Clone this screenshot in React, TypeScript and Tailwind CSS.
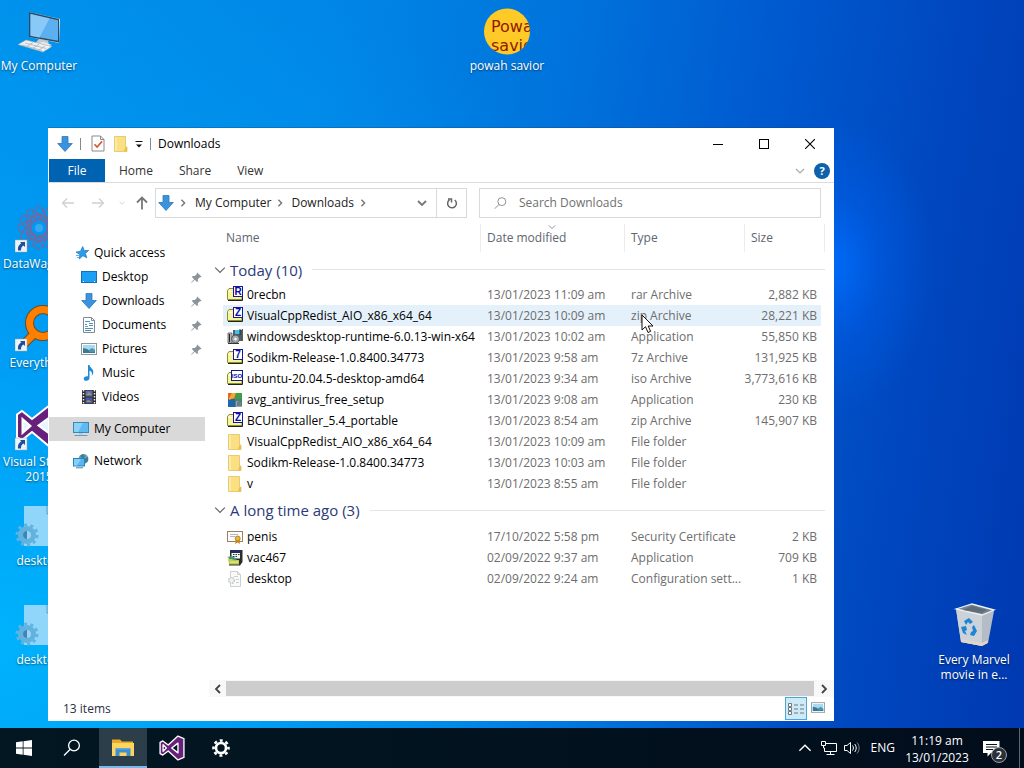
import type { ReactNode } from 'react';

type ArchiveLabel = 'R' | 'Z' | '7' | 'ISO';

interface FileEntry {
    name: string;
    icon: ReactNode;
    modified: string;
    type: string;
    size?: string;
    hovered?: boolean;
}

interface FileGroup {
    label: string;
    headerClass: string;
    files: FileEntry[];
}

/* ---------- small glyphs ---------- */

interface ChevronProps {
    direction: 'up' | 'down' | 'left' | 'right';
    size?: number;
    stroke?: number;
    className?: string;
}

const chevronPaths = {
    up: 'M1 7 L5 3 L9 7',
    down: 'M1 3 L5 7 L9 3',
    left: 'M7 1 L3 5 L7 9',
    right: 'M3 1 L7 5 L3 9',
};

function Chevron({direction, size = 10, stroke = 1.2, className}: ChevronProps) {
    return (
        <svg width={size} height={size} viewBox="0 0 10 10" fill="none" stroke="currentColor" strokeWidth={stroke} className={className}>
            <path d={chevronPaths[direction]} />
        </svg>
    );
}

function DownloadArrow() {
    return (
        <svg width="16" height="16" viewBox="0 0 16 16" className="shrink-0">
            <path d="M5 .5h6v7h4.3L8 15.5.7 7.5H5z" fill="#3c93dd" stroke="#2f78bb" strokeWidth=".8" />
        </svg>
    );
}

function FolderIcon() {
    return (
        <svg width="16" height="16" viewBox="0 0 16 16" className="shrink-0">
            <path d="M1.500.5h11v10.500h1.500v4.500H1.500z" fill="#fbdf83" stroke="#e3c062" strokeWidth=".8" />
            <path d="M2 1h2v14H2z" fill="#fdeaa6" />
            <path d="M12.4 11.2H14v4h-3z" fill="#e8bf4f" />
        </svg>
    );
}

function CheckDocIcon() {
    return (
        <svg width="14" height="17" viewBox="0 0 14 17">
            <path d="M1 1h8.5L13 4.500V16H1z" fill="#fff" stroke="#8a8a8a" />
            <path d="M9.500 1v3.500H13" fill="none" stroke="#8a8a8a" />
            <path d="M3.500 9.200l2.600 2.800L11 6.400" fill="none" stroke="#d9572f" strokeWidth="1.600" />
        </svg>
    );
}

function PinIcon() {
    return (
        <svg width="11" height="11" viewBox="0 0 11 11" fill="#8b949b">
            <path d="M6.2.4l4.400 4.300-1.200.6-.6-.1-2 2 .1 2-.9.9L3.700 7.800.6 10.700l-.4-.4 2.900-3.100L.9 4.900l.9-.9 2.100.1 2-2-.2-.7z" />
        </svg>
    );
}

/* ---------- sidebar icons ---------- */

function StarIcon() {
    return (
        <svg width="16" height="16" viewBox="0 0 16 16" className="shrink-0">
            <path d="M9.700 1.500l1.500 4.100 4.500-.2-3.300 3.100 1.500 4.300-4-2-3.600 3.200.5-4.600L3 7.100l4.500-.9z" fill="#2d9be8" stroke="#1c78c0" strokeWidth=".7" />
            <path d="M3 10.500h3M4 12.500h2" stroke="#5cb4ee" />
        </svg>
    );
}

function DesktopIcon() {
    return (
        <svg width="16" height="16" viewBox="0 0 16 16" className="shrink-0">
            <rect x=".5" y="2.500" width="15" height="11" fill="#1ba0f5" stroke="#1671b0" />
            <path d="M2 12.500h1M13 12.500h1" stroke="#fff" />
        </svg>
    );
}

function DocumentIcon() {
    return (
        <svg width="16" height="16" viewBox="0 0 16 16" className="shrink-0">
            <path d="M2.500.5h8l3 3v12h-11z" fill="#fff" stroke="#808b93" />
            <path d="M10.500.5v3h3" fill="none" stroke="#808b93" />
            <path d="M4 4.500h5M4 7.500h2M8 6.500h4M8 8.500h4M4 11.500h8M4 13.500h6" stroke="#4c93bf" />
            <path d="M4 9.500h3" stroke="#5fae7c" />
        </svg>
    );
}

function PictureIcon({small}: { small?: boolean }) {
    return (
        <svg width={small ? 14 : 16} height={small ? 11 : 12} viewBox="0 0 16 12" className="shrink-0">
            <rect x=".5" y=".5" width="15" height="11" fill="#fff" stroke="#8c979e" />
            <path d="M2 2h12v8H2z" fill="#a8d8f2" />
            <path d="M2 5l4 1 3 2h5v2H2z" fill="#3d7891" />
            <path d="M8 7l3-2 3 2v2H8z" fill="#4e93b0" />
        </svg>
    );
}

function MusicIcon() {
    return (
        <svg width="16" height="16" viewBox="0 0 16 16" className="shrink-0">
            <path d="M7 0h1.500c.4 2.800 4.200 3.800 3.800 7.400-.2 1.600-.9 2.600-1.800 3.400.9-2.200.7-4.300-2-5v6.900c0 1.800-1.400 3.100-3.200 3.100-1.600 0-2.600-.9-2.600-2.100 0-1.600 1.700-2.800 4.300-2.500z" fill="#1e8ad8" />
        </svg>
    );
}

function VideoIcon() {
    return (
        <svg width="16" height="16" viewBox="0 0 16 16" className="shrink-0">
            <path d="M1 1h14v14H1z" fill="#2b2b2b" />
            <path d="M4.500 1.500h7v6h-7z" fill="#5a6db5" />
            <path d="M4.500 8.500h7v6h-7z" fill="#4557a8" />
            <path d="M5 6l3-3 3 3zM5 13l2-2 4 2z" fill="#a89a45" />
            <path d="M2.500 1v14M13.500 1v14" stroke="#f2efe0" strokeWidth="1.500" strokeDasharray="1.500 1.500" />
        </svg>
    );
}

function ComputerIcon() {
    return (
        <svg width="16" height="16" viewBox="0 0 16 16" className="shrink-0">
            <rect x=".5" y="1.500" width="15" height="10" fill="#5dbbf2" stroke="#3b88b8" />
            <path d="M1 2h9l-5 9H1z" fill="#8ad2f8" />
            <path d="M6 12h4v1.500H6z" fill="#b9c7d0" />
            <path d="M1.500 14.500h13" stroke="#5b9ec4" />
        </svg>
    );
}

function NetworkIcon() {
    return (
        <svg width="16" height="16" viewBox="0 0 16 16" className="shrink-0">
            <circle cx="10.500" cy="6" r="5" fill="#6f9fb0" />
            <path d="M7 3l3-2 2 2-2 3zM11 6l4-2v4l-3 2z" fill="#3b7f95" />
            <rect x=".5" y="5.500" width="11" height="7.500" fill="#55b8f2" stroke="#2f80b5" />
            <path d="M1 6h7l-4 6.500H1z" fill="#85d0f8" />
            <path d="M3 14.800h7" stroke="#3b88b8" />
        </svg>
    );
}

/* ---------- file icons ---------- */

function ArchiveIcon({label}: { label: ArchiveLabel }) {
    const wide = label === 'ISO';
    return (
        <svg width="16" height="18" viewBox="0 0 16 18" className="shrink-0">
            <path d="M.5 13.500v-9l1.500-2h4l1 1.500h8v9.500z" fill="#f5f59a" stroke="#8f8f2c" />
            <path d="M1 14.500h14.500V7" fill="none" stroke="#222" />
            <path d="M2 5.500h3" stroke="#fff" />
            <rect x={wide ? 4.5 : 6.5} y=".5" width={wide ? 11 : 9} height="10" fill="#fff" stroke="#16169a" />
            <text
                x={wide ? 10 : 11}
                y={wide ? 8 : 9}
                textAnchor="middle"
                fontSize={wide ? 6 : 10}
                fontWeight="700"
                fill="#0a0aa8"
                className="font-['Liberation_Sans',sans-serif]"
            >
                {label}
            </text>
        </svg>
    );
}

function InstallerIcon() {
    return (
        <svg width="16" height="16" viewBox="0 0 16 16" className="shrink-0">
            <path d="M6 1h9v11H6z" fill="#4f6068" />
            <path d="M8 1h5v4H8z" fill="#3fc3e8" />
            <path d="M1 4h4v10H1z" fill="#c5c5c5" stroke="#555" strokeWidth=".8" />
            <path d="M2.500 5v8" stroke="#222" strokeWidth="1.200" />
            <circle cx="8.500" cy="10" r="4" fill="#a5adb0" stroke="#444" strokeWidth=".8" />
            <circle cx="8.500" cy="10" r="1.200" fill="#fff" />
            <path d="M1 14.500h11M13 0v6M15.300 0v12" stroke="#222" strokeWidth=".9" />
        </svg>
    );
}

function AvgIcon() {
    return (
        <svg width="16" height="16" viewBox="0 0 16 16" className="shrink-0">
            <path d="M1 1h7v6H1z" fill="#e8622c" />
            <path d="M8 1h7v6H8z" fill="#3f9c4b" />
            <path d="M1 7h7v8H1z" fill="#1f67ad" />
            <path d="M8 7h7v8H8z" fill="#4d7f74" />
            <path d="M5 1h4L7 6 2 8V6z" fill="#f2a92e" />
            <path d="M9 9l4 1 2 5H9z" fill="#9aa8ab" />
            <path d="M10 11h3M10 13h4" stroke="#41505a" />
        </svg>
    );
}

function CertificateIcon() {
    return (
        <svg width="16" height="16" viewBox="0 0 16 16" className="shrink-0">
            <rect x=".5" y="2.500" width="15" height="10" fill="#fffdf8" stroke="#98806f" />
            <path d="M3 5.500h8M3 7.500h5" stroke="#b5b5c5" />
            <path d="M9 10l-1 5 2.500-1.500L13 15l-.8-5z" fill="#c98a1a" />
            <circle cx="10.700" cy="9.500" r="2.500" fill="#e9b53a" stroke="#9c6c14" strokeWidth=".7" />
        </svg>
    );
}

function VacIcon() {
    return (
        <svg width="16" height="16" viewBox="0 0 16 16" className="shrink-0">
            <path d="M3 0h12.500v12L13 15.500H2V8h1z" fill="#2a2f2a" />
            <path d="M4 .5h10v2H4z" fill="#1c2d80" />
            <path d="M4.500 3h8.500v5.500H4.500z" fill="#f4f6f0" />
            <path d="M6 4.500h1.500M8.500 4.500H10M11 4.500h1.500M6 6.500h1.500M8.500 6.500H10" stroke="#333" />
            <path d="M1 8.500h6l2 1.500h3v4.500H2z" fill="#c3cb4c" />
            <path d="M0 7l5-1 5 3-2 1.500z" fill="#3f9a80" />
            <path d="M3 12h8" stroke="#f0f3b0" />
        </svg>
    );
}

function ConfigIcon() {
    return (
        <svg width="16" height="16" viewBox="0 0 16 16" className="shrink-0">
            <path d="M3.500.5h7l3 3v12h-10z" fill="#fafafa" stroke="#cfcfcf" />
            <path d="M10.500.5v3h3M7 5.500h4M9 8.500h3M9 11.500h3" fill="none" stroke="#cfcfcf" />
            <circle cx="4.500" cy="9.500" r="2.800" fill="#f0f3f5" stroke="#c2c9cd" strokeWidth="1.600" strokeDasharray="1.500 .8" />
        </svg>
    );
}

/* ---------- desktop icons ---------- */

function ShortcutBadge() {
    return (
        <g>
            <rect x="0" y="34" width="12" height="12" fill="#eef3f7" stroke="#9aa7b0" strokeWidth=".5" />
            <path d="M5 36h5v5L8.400 39.400C6.500 40.600 6 42 6 44.500H3c-.5-3 .6-5.500 3.300-7.200z" fill="#1f4f9a" />
        </g>
    );
}

function BigComputer() {
    return (
        <svg width="48" height="48" viewBox="0 0 48 48">
            <path d="M14 4l31 7-1 24-30-6z" fill="#dfe7ec" />
            <path d="M14 4l30 7v23.500L14 29z" fill="#2d4a60" />
            <path d="M15.500 6L43 12.300v20.500l-27.500-5z" fill="#5cb0f0" />
            <path d="M15.500 6l19 4.400-10 19-9-1.600z" fill="#88c9f7" />
            <path d="M24 31l9 1.800 1 4-10 1-4-2.500z" fill="#c5ccd1" />
            <path d="M20 36l8-2 9 3-5 2z" fill="#eceff1" />
            <path d="M3 36.500L11 32l26 6.500L28 44z" fill="#eef1f3" stroke="#9da6ad" strokeWidth=".6" />
            <path d="M7 37l20 5.500M10 35l21 5.500M12 38.500l6-4M18 40.300l6-4M24 42l6-4" stroke="#aab2b8" strokeWidth=".8" />
        </svg>
    );
}

function PowahIcon() {
    return (
        <svg width="48" height="48" viewBox="0 0 48 48">
            <defs>
                <clipPath id="powah-circle">
                    <circle cx="24" cy="23.500" r="23" />
                </clipPath>
            </defs>
            <circle cx="24" cy="23.500" r="23" fill="#ffc928" />
            <g clipPath="url(#powah-circle)" fontSize="16" fill="#8f1a00" className="font-['DejaVu_Sans',sans-serif]">
                <text x="8" y="24">Powa</text>
                <text x="8" y="43">savio</text>
            </g>
        </svg>
    );
}

function DataWagonIcon() {
    const angles = [0, 30, 60, 90, 120, 150];
    return (
        <svg width="48" height="48" viewBox="0 0 48 48">
            <g fill="none" stroke="#8a5f92" strokeWidth="1.500" opacity=".85">
                {angles.map((angle) => (
                    <ellipse key={angle} cx="24" cy="22" rx="21" ry="8" transform={`rotate(${angle} 24 22)`} strokeDasharray="4 1.500" />
                ))}
                <circle cx="24" cy="22" r="13" />
            </g>
            <circle cx="24" cy="22" r="4" fill="#36a9ee" />
            <ShortcutBadge />
        </svg>
    );
}

function EverythingIcon() {
    return (
        <svg width="48" height="48" viewBox="0 0 48 48">
            <path d="M6 42L18 30" stroke="#6b4a20" strokeWidth="9" />
            <circle cx="28" cy="18" r="13.500" fill="none" stroke="#6b4a20" strokeWidth="9" />
            <path d="M6 42L18 30" stroke="#ff8000" strokeWidth="7" />
            <circle cx="28" cy="18" r="13.500" fill="none" stroke="#ff8000" strokeWidth="7" />
            <ShortcutBadge />
        </svg>
    );
}

function VisualStudioMark({size}: { size: number }) {
    return (
        <svg width={size} height={size} viewBox="0 0 48 48">
            <path
                fillRule="evenodd"
                d="M35 2l11 4.500v35L35 46 17 29.500 7 37l-5-2.500v-21L7 11l10 7.500zM35 15L23.500 24 35 33zM7.500 18v12l6-6z"
                fill="#68217a"
                stroke="#fff"
                strokeWidth="2.500"
                strokeLinejoin="round"
            />
        </svg>
    );
}

function VisualStudioDesktop() {
    return (
        <svg width="48" height="48" viewBox="0 0 48 48">
            <path d="M2 10L7 7l34 29V5L7 36l-5-3z" fill="#fff" opacity=".9" />
            <path
                fillRule="evenodd"
                d="M35 1l11 4.500v33L35 43 17 28 7 36l-5-2.500V10.500L7 7l10 8zM35 13L23.500 21.500 35 30zM7.500 15v14l8-7z"
                fill="#68217a"
                stroke="#fff"
                strokeWidth="2"
            />
            <ShortcutBadge />
        </svg>
    );
}

function IniIcon() {
    return (
        <svg width="48" height="48" viewBox="0 0 48 48">
            <path d="M9 3h24l8 8v32H9z" fill="#8fd6fa" />
            <path d="M32 3v8h8" fill="none" stroke="#4fa3d0" />
            <circle cx="12" cy="32" r="10" fill="none" stroke="#62b2e0" strokeWidth="3" strokeDasharray="3 3.280" />
            <circle cx="12" cy="32" r="6.500" fill="#9bd3f2" stroke="#62b2e0" strokeWidth="5" />
            <path d="M12 28a4 4 0 0 0 0 8z" fill="#3a86b8" />
        </svg>
    );
}

function RecycleBin() {
    return (
        <svg width="48" height="48" viewBox="0 0 48 48">
            <path d="M6 7l5 33 21 4 6-3 6-32z" fill="#b4bcc6" />
            <path d="M6 7l5 33 21 4V13z" fill="#cdd2d8" />
            <path d="M6 7l16-5 22 6-12 5z" fill="#76828e" stroke="#eef2f5" strokeWidth="1.300" />
            <path d="M13 8l9-4 15 4-6 3z" fill="#5f6c79" />
            <path d="M11 37l21 4 6-3-.5 3-5.500 3-21-4z" fill="#e4d6c6" />
            <g fill="#1c86d6">
                <path d="M14 19l5-3 4 4-3 2-2-2-2 3z" />
                <path d="M11 25l5-1 1 4-2 1 2 4-4-2z" />
                <path d="M24 23l3 6-3 5-4-1 1-3 2-1-1-4z" />
            </g>
        </svg>
    );
}

interface DesktopItemProps {
    label: string;
    place: string;
    align?: string;
    children: ReactNode;
}

function DesktopItem({label, place, align = 'text-center', children}: DesktopItemProps) {
    return (
        <button type="button" className={`absolute flex w-20 flex-col gap-0.5 text-white ${place}`}>
            <span className="pl-4">{children}</span>
            <span className={`w-full leading-[15px] [text-shadow:0_1px_2px_rgba(0,0,0,0.5)] ${align}`}>{label}</span>
        </button>
    );
}

/* ---------- explorer window ---------- */

const navItems = [
    {label: 'Quick access', icon: <StarIcon />, rowClass: 'pl-[25px]'},
    {label: 'Desktop', icon: <DesktopIcon />, rowClass: 'pl-[33px]', pinned: true},
    {label: 'Downloads', icon: <DownloadArrow />, rowClass: 'pl-[33px]', pinned: true},
    {label: 'Documents', icon: <DocumentIcon />, rowClass: 'pl-[33px]', pinned: true},
    {label: 'Pictures', icon: <PictureIcon />, rowClass: 'pl-[33px]', pinned: true},
    {label: 'Music', icon: <MusicIcon />, rowClass: 'pl-[33px]'},
    {label: 'Videos', icon: <VideoIcon />, rowClass: 'pl-[33px]'},
    {label: 'My Computer', icon: <ComputerIcon />, rowClass: 'mt-2 pl-6 ml-px bg-[#d9d9d9]'},
    {label: 'Network', icon: <NetworkIcon />, rowClass: 'mt-2 pl-[25px]'},
];

const groups: FileGroup[] = [
    {
        label: 'Today (10)',
        headerClass: 'h-[29px]',
        files: [
            {name: '0recbn', icon: <ArchiveIcon label="R" />, modified: '13/01/2023 11:09 am', type: 'rar Archive', size: '2,882 KB'},
            {name: 'VisualCppRedist_AIO_x86_x64_64', icon: <ArchiveIcon label="Z" />, modified: '13/01/2023 10:09 am', type: 'zip Archive', size: '28,221 KB', hovered: true},
            {name: 'windowsdesktop-runtime-6.0.13-win-x64', icon: <InstallerIcon />, modified: '13/01/2023 10:02 am', type: 'Application', size: '55,850 KB'},
            {name: 'Sodikm-Release-1.0.8400.34773', icon: <ArchiveIcon label="7" />, modified: '13/01/2023 9:58 am', type: '7z Archive', size: '131,925 KB'},
            {name: 'ubuntu-20.04.5-desktop-amd64', icon: <ArchiveIcon label="ISO" />, modified: '13/01/2023 9:34 am', type: 'iso Archive', size: '3,773,616 KB'},
            {name: 'avg_antivirus_free_setup', icon: <AvgIcon />, modified: '13/01/2023 9:08 am', type: 'Application', size: '230 KB'},
            {name: 'BCUninstaller_5.4_portable', icon: <ArchiveIcon label="Z" />, modified: '13/01/2023 8:54 am', type: 'zip Archive', size: '145,907 KB'},
            {name: 'VisualCppRedist_AIO_x86_x64_64', icon: <FolderIcon />, modified: '13/01/2023 10:09 am', type: 'File folder'},
            {name: 'Sodikm-Release-1.0.8400.34773', icon: <FolderIcon />, modified: '13/01/2023 10:03 am', type: 'File folder'},
            {name: 'v', icon: <FolderIcon />, modified: '13/01/2023 8:55 am', type: 'File folder'},
        ],
    },
    {
        label: 'A long time ago (3)',
        headerClass: 'h-8',
        files: [
            {name: 'penis', icon: <CertificateIcon />, modified: '17/10/2022 5:58 pm', type: 'Security Certificate', size: '2 KB'},
            {name: 'vac467', icon: <VacIcon />, modified: '02/09/2022 9:37 am', type: 'Application', size: '709 KB'},
            {name: 'desktop', icon: <ConfigIcon />, modified: '02/09/2022 9:24 am', type: 'Configuration sett...', size: '1 KB'},
        ],
    },
];

function TitleBar() {
    return (
        <header className="flex h-[31px] items-center pr-px pl-[9px]">
            <DownloadArrow />
            <span className="ml-[7px] h-3 w-px bg-[#888]" />
            <button type="button" aria-label="Properties" className="ml-2.5"><CheckDocIcon /></button>
            <button type="button" aria-label="New folder" className="ml-2"><FolderIcon /></button>
            <button type="button" aria-label="Customize toolbar" className="ml-1.5">
                <svg width="8" height="8" viewBox="0 0 8 8">
                    <path d="M.5 1.500h7" stroke="#111" />
                    <path d="M1 4.500h6L4 7.500z" fill="#111" />
                </svg>
            </button>
            <span className="ml-[7px] h-3 w-px bg-[#888]" />
            <h1 className="ml-[7px] flex-1 text-black">Downloads</h1>
            <button type="button" aria-label="Minimize" className="flex h-full w-[46px] items-center justify-center">
                <svg width="10" height="10"><path d="M0 5.500h10" stroke="#000" /></svg>
            </button>
            <button type="button" aria-label="Maximize" className="flex h-full w-[46px] items-center justify-center">
                <svg width="10" height="10"><rect x=".5" y=".5" width="9" height="9" fill="none" stroke="#000" /></svg>
            </button>
            <button type="button" aria-label="Close" className="flex h-full w-[46px] items-center justify-center">
                <svg width="10" height="10"><path d="M0 0l10 10M10 0L0 10" stroke="#000" strokeWidth="1.100" /></svg>
            </button>
        </header>
    );
}

function RibbonTabs() {
    return (
        <div className="flex h-6 items-stretch border-b border-[#dcdcdc] pr-1 pl-px text-[#333]">
            <button type="button" className="mr-px w-14 bg-[#0063b1] text-white">File</button>
            <button type="button" className="px-[13px]">Home</button>
            <button type="button" className="px-[13px]">Share</button>
            <button type="button" className="px-[13px]">View</button>
            <button type="button" aria-label="Expand ribbon" className="mr-[9px] ml-auto text-[#aaa]">
                <Chevron direction="down" />
            </button>
            <button type="button" aria-label="Help" className="size-4 self-center rounded-full bg-[#0d62ab] text-[11px] leading-4 font-bold text-white">
                ?
            </button>
        </div>
    );
}

function NavArrow({path}: { path: string }) {
    return (
        <svg width="14" height="12" viewBox="0 0 14 12" fill="none" className="text-[#d0d0d0]" stroke="currentColor" strokeWidth="1.300">
            <path d={path} />
        </svg>
    );
}

function AddressRow() {
    return (
        <div className="flex h-[38px] items-center gap-3 px-[13px] pt-0.5">
            <div className="flex w-[82px] items-center">
                <button type="button" aria-label="Back"><NavArrow path="M13 6H1.500M6 1.500L1.500 6 6 10.500" /></button>
                <button type="button" aria-label="Forward" className="ml-4"><NavArrow path="M1 6h11.500M8 1.500L12.500 6 8 10.500" /></button>
                <button type="button" aria-label="Recent locations" className="ml-3.5 text-[#c5c5c5]"><Chevron direction="down" size={6} /></button>
                <button type="button" aria-label="Up" className="ml-[11px]">
                    <svg width="12" height="14" viewBox="0 0 12 14" fill="none" stroke="#777" strokeWidth="1.800">
                        <path d="M6 13.500V2M1 6.500l5-5 5 5" />
                    </svg>
                </button>
            </div>
            <div className="flex h-[30px] min-w-0 flex-1 items-center border border-[#d9d9d9] pl-0.5">
                <DownloadArrow />
                <Chevron direction="right" size={8} stroke={1.8} className="ml-[5px] text-[#777]" />
                <button type="button" className="ml-2 text-[#222]">My Computer</button>
                <Chevron direction="right" size={8} stroke={1.8} className="ml-[5px] text-[#777]" />
                <button type="button" className="ml-[7px] text-[#222]">Downloads</button>
                <Chevron direction="right" size={8} stroke={1.8} className="ml-[5px] text-[#777]" />
                <button type="button" aria-label="Previous locations" className="mr-[9px] ml-auto text-[#777]">
                    <Chevron direction="down" stroke={1.8} />
                </button>
                <button type="button" aria-label="Refresh" className="flex h-full w-[30px] items-center justify-center border-l border-[#d9d9d9]">
                    <svg width="12" height="12" viewBox="0 0 12 12" fill="none" stroke="#666" strokeWidth="1.500">
                        <path d="M3.500 2.800A4.400 4.400 0 1 0 8.800 3M2 2h3.500v3.500" />
                    </svg>
                </button>
            </div>
            <label className="flex h-[30px] w-[342px] items-center border border-[#d9d9d9] pl-3.5">
                <svg width="14" height="14" viewBox="0 0 14 14" fill="none" stroke="#888">
                    <circle cx="8.500" cy="5.500" r="4.300" />
                    <path d="M5.500 8.500L.8 13.200" />
                </svg>
                <input
                    type="text"
                    aria-label="Search Downloads"
                    placeholder="Search Downloads"
                    className="ml-3 w-full bg-transparent outline-none placeholder:text-[#707070]"
                />
            </label>
        </div>
    );
}

function Sidebar() {
    return (
        <nav className="w-[157px] shrink-0 pt-5">
            <ul>
                {navItems.map(({label, icon, rowClass, pinned}) => (
                    <li key={label} className={`flex h-6 items-center pr-[3px] ${rowClass}`}>
                        <a href="#" className="flex flex-1 items-center gap-[5px] text-black">
                            {icon}
                            {label}
                        </a>
                        {pinned && <PinIcon />}
                    </li>
                ))}
            </ul>
        </nav>
    );
}

function FileRow({name, icon, modified, type, size, hovered}: FileEntry) {
    const background = hovered ? 'bg-[#e5f1fa]' : '';
    return (
        <tr className="h-[21px] text-[#6d6d6d]">
            <td />
            <td className={`pl-1 ${background}`}>
                <span className="flex items-center gap-1 text-black">
                    {icon}
                    {name}
                </span>
            </td>
            <td className={`pl-[7px] ${background}`}>{modified}</td>
            <td className={`pl-[7px] ${background}`}>{type}</td>
            <td className={`pr-1 text-right ${background}`}>{size}</td>
            <td />
        </tr>
    );
}

function FileTable() {
    return (
        <table className="w-full table-fixed border-collapse text-left whitespace-nowrap">
            <colgroup>
                <col className="w-3.5" />
                <col />
                <col className="w-36" />
                <col className="w-[120px]" />
                <col className="w-[77px]" />
                <col className="w-1" />
            </colgroup>
            <thead>
                <tr className="h-[34px] text-[#5c6670]">
                    <th />
                    <th className="pl-[3px] font-normal">Name</th>
                    <th className="relative font-normal">
                        <div className="flex h-7 items-center border-l border-[#ececec] pl-1.5">Date modified</div>
                        <Chevron direction="down" size={8} stroke={1} className="absolute top-0.5 left-[68px] text-[#777]" />
                    </th>
                    <th className="font-normal">
                        <div className="flex h-7 items-center border-l border-[#ececec] pl-1.5">Type</div>
                    </th>
                    <th className="font-normal">
                        <div className="flex h-7 items-center border-l border-[#ececec] pl-1.5">Size</div>
                    </th>
                    <th><div className="h-7 border-r border-[#ececec]" /></th>
                </tr>
            </thead>
            {groups.map(({label, headerClass, files}) => (
                <tbody key={label}>
                    <tr className={headerClass}>
                        <th colSpan={6} className="pl-[5px] font-normal">
                            <button type="button" className="flex w-full items-center text-[15px] leading-5 text-[#2b3a78]">
                                <Chevron direction="down" size={12} stroke={1} className="mr-1 text-[#666]" />
                                {label}
                                <span className="ml-2.5 h-px flex-1 bg-[#e4e4e4]" />
                            </button>
                        </th>
                    </tr>
                    {files.map((file) => (
                        <FileRow key={file.name} {...file} />
                    ))}
                </tbody>
            ))}
        </table>
    );
}

function ScrollBar() {
    return (
        <div className="flex h-[17px] items-center bg-[#f8f8f8] text-[#444]">
            <button type="button" aria-label="Scroll left" className="flex w-[17px] justify-center">
                <Chevron direction="left" stroke={1.8} />
            </button>
            <div className="h-[15px] flex-1 bg-[#cdcdcd]" />
            <button type="button" aria-label="Scroll right" className="flex w-5 justify-center">
                <Chevron direction="right" stroke={1.8} />
            </button>
        </div>
    );
}

function StatusBar() {
    return (
        <footer className="flex h-6 items-start pr-[9px] pl-[15px] text-[#2b2f45]">
            <span className="flex-1 leading-6">13 items</span>
            <button type="button" aria-label="Details view" className="flex h-[23px] w-[22px] items-center justify-center border border-[#4aa8d0] bg-[#cfeaf7]">
                <svg width="16" height="12" viewBox="0 0 16 12" fill="none" stroke="#6c7880">
                    <path d="M.5.5h3v3h-3zM.5 4.500h3v3h-3zM.5 8.500h3v3h-3z" fill="#fff" />
                    <path d="M6 2h4M12 2h4M6 6h4M12 6h4M6 10h4M12 10h4" />
                </svg>
            </button>
            <button type="button" aria-label="Large icons view" className="ml-1 flex h-[21px] items-center">
                <PictureIcon small />
            </button>
        </footer>
    );
}

function ExplorerWindow() {
    return (
        <section className="absolute top-32 right-[190px] bottom-[7px] left-12 flex flex-col bg-white shadow-[0_-1px_0_0_rgba(30,60,100,0.3)]">
            <TitleBar />
            <RibbonTabs />
            <AddressRow />
            <div className="flex min-h-0 flex-1">
                <Sidebar />
                <main className="ml-1 flex min-w-0 flex-1 flex-col">
                    <div className="min-h-0 flex-1 pr-[9px]">
                        <FileTable />
                    </div>
                    <ScrollBar />
                </main>
            </div>
            <StatusBar />
            <svg width="14" height="20" viewBox="0 0 14 20" className="absolute top-[186px] left-[593px]">
                <path d="M1 1v15l3.500-3.300L7 18.500l2.600-1.100L7.200 12H12z" fill="#fff" stroke="#111" />
            </svg>
        </section>
    );
}

/* ---------- taskbar ---------- */

const taskButton = 'flex items-center justify-center';

function TaskBar() {
    return (
        <footer className="flex h-10 shrink-0 items-stretch bg-[linear-gradient(90deg,#021722,#020d1c)] text-white">
            <button type="button" aria-label="Start" className={`${taskButton} w-12`}>
                <svg width="16" height="16" viewBox="0 0 16 16" fill="#fff">
                    <path d="M0 2.200L6.700 1.300v6.300H0zM7.500 1.200L16 0v7.600H7.500zM0 8.400h6.700v6.300L0 13.800zM7.500 8.400H16V16l-8.500-1.200z" />
                </svg>
            </button>
            <button type="button" aria-label="Search" className={`${taskButton} w-12`}>
                <svg width="18" height="18" viewBox="0 0 18 18" fill="none" stroke="#fff" strokeWidth="1.300">
                    <circle cx="11" cy="6.500" r="5.400" />
                    <path d="M7.200 10.300L1 16.500" />
                </svg>
            </button>
            <button type="button" aria-label="File Explorer" className={`${taskButton} ml-[3px] w-12 border-b-2 border-[#76b9ed] bg-[#2c3e49] pt-0.5`}>
                <svg width="22" height="20" viewBox="0 0 22 20">
                    <path d="M0 1.500h8l2 2h11v4H0z" fill="#e8a92c" />
                    <path d="M0 5h22v13H0z" fill="#fdd45e" />
                    <path d="M3.500 18v-7h15v7h-4v-3.500h-7V18z" fill="#3f8fd0" />
                    <path d="M3.500 10h15v1.500h-15z" fill="#5aa9e0" />
                </svg>
            </button>
            <button type="button" aria-label="Visual Studio" className={`${taskButton} w-[49px]`}>
                <VisualStudioMark size={26} />
            </button>
            <button type="button" aria-label="Settings" className={`${taskButton} w-[49px]`}>
                <svg width="18" height="18" viewBox="0 0 18 18" fill="none" stroke="#fff">
                    <circle cx="9" cy="9" r="5" strokeWidth="2.600" />
                    <circle cx="9" cy="9" r="7.500" strokeWidth="2.600" strokeDasharray="2.950 2.940" strokeDashoffset="1.470" />
                </svg>
            </button>
            <div className="ml-auto flex items-center">
                <button type="button" aria-label="Show hidden icons"><Chevron direction="up" size={14} stroke={1} /></button>
                <button type="button" aria-label="Network" className="ml-2">
                    <svg width="18" height="16" viewBox="0 0 18 16" fill="none" stroke="#fff">
                        <path d="M6 3.500h10.500v8H4.500V8M10.500 11.500v3M6.500 14.500h8" />
                        <path d="M1.500 1.500h4v4h-4zM3.500 5.500V8h1" />
                    </svg>
                </button>
                <button type="button" aria-label="Volume" className="ml-1.5">
                    <svg width="17" height="14" viewBox="0 0 17 14" fill="none" stroke="#fff">
                        <path d="M.5 4.500H3L6.500 1.500v11L3 9.500H.5z" />
                        <path d="M8.500 4.500c1.200 1.500 1.200 3.500 0 5M10.700 3c2 2.400 2 5.600 0 8" />
                        <path d="M13 1.500c2.800 3.300 2.800 7.700 0 11" stroke="#888" />
                    </svg>
                </button>
                <button type="button" className="ml-2.5">ENG</button>
                <button type="button" className="ml-2 w-[68px] pt-px text-center leading-[17px] whitespace-nowrap">
                    11:19 am
                    <br />
                    13/01/2023
                </button>
                <button type="button" aria-label="2 notifications" className="relative mr-2.5 ml-3 flex h-10 w-[26px] items-center">
                    <svg width="17" height="17" viewBox="0 0 17 17">
                        <path d="M0 1h16.500v12H8l-3.500 3.500V13H0z" fill="#fff" />
                        <path d="M3 4.500h11M3 7h11M3 9.500h7" stroke="#08131f" />
                    </svg>
                    <span className="absolute top-[19px] left-2 size-4 rounded-full border border-[#9aa0a6] bg-[#2b3138] text-center text-[11px] leading-[14px] font-semibold">2</span>
                </button>
            </div>
            <div className="w-[5px] border-l border-[#5a6673]" />
        </footer>
    );
}

export default function App() {
    return (
        <div className="flex h-screen flex-col overflow-hidden bg-[radial-gradient(ellipse_100px_150px_at_834px_265px,rgba(0,110,255,0.85),rgba(0,100,245,0.4)_45%,rgba(0,80,220,0)),radial-gradient(ellipse_800px_700px_at_0px_640px,rgba(0,184,255,0.85),rgba(0,170,255,0.5)_45%,rgba(0,110,225,0)),linear-gradient(98deg,#0090ea_0%,#0086e6_30%,#0074dc_50%,#005bd0_68%,#0048c0_84%,#0038b0_100%)] font-['Open_Sans','Noto_Sans',sans-serif] text-[12px] leading-4">
            <div className="relative min-h-0 flex-1">
                <DesktopItem label="My Computer" place="top-2 -left-px"><BigComputer /></DesktopItem>
                <DesktopItem label="powah savior" place="top-2 left-[467px]"><PowahIcon /></DesktopItem>
                <DesktopItem label="DataWagon" place="top-[206px] -left-px" align="pl-1 text-left"><DataWagonIcon /></DesktopItem>
                <DesktopItem label="Everything" place="top-[305px] -left-px"><EverythingIcon /></DesktopItem>
                <DesktopItem label="Visual Studio 2015" place="top-[404px] -left-px"><VisualStudioDesktop /></DesktopItem>
                <DesktopItem label="desktop" place="top-[503px] -left-px"><IniIcon /></DesktopItem>
                <DesktopItem label="desktop" place="top-[602px] -left-px"><IniIcon /></DesktopItem>
                <DesktopItem label="Every Marvel movie in e..." place="top-[602px] right-[10px]"><RecycleBin /></DesktopItem>
                <ExplorerWindow />
            </div>
            <TaskBar />
        </div>
    );
}
